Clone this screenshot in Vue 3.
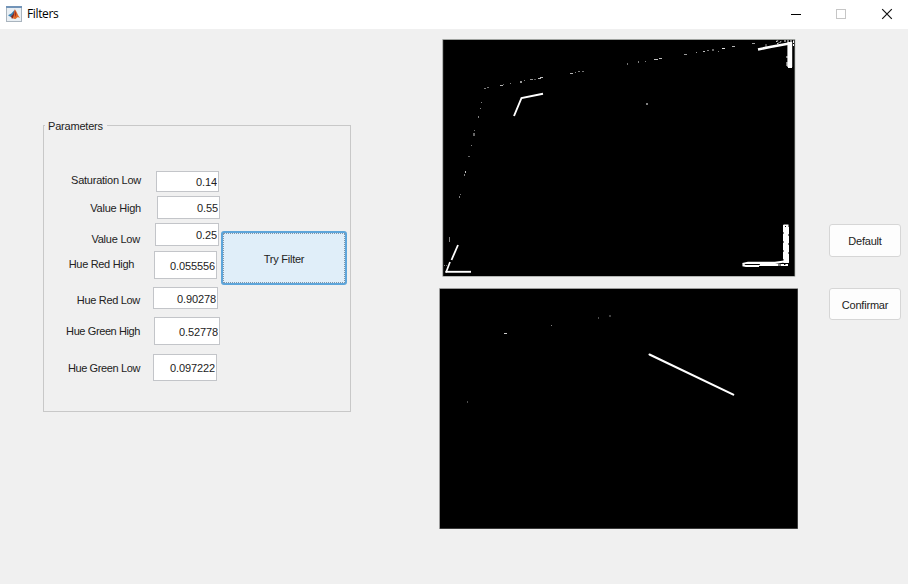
<script setup>
import { reactive } from 'vue'

const params = reactive([
  { label: 'Saturation Low', value: '0.14' },
  { label: 'Value High', value: '0.55' },
  { label: 'Value Low', value: '0.25' },
  { label: 'Hue Red High', value: '0.055556' },
  { label: 'Hue Red Low', value: '0.90278' },
  { label: 'Hue Green High', value: '0.52778' },
  { label: 'Hue Green Low', value: '0.097222' },
])

// Isolated mask pixels: [x, y, width, height, brightness]
const redSpecks = [
  [484, 88, 2, 1, 0.5], [487, 87, 2, 1, 0.45], [500, 85, 3, 1, 0.7], [503, 84, 1, 1, 0.4],
  [510, 83, 1, 1, 0.5], [520, 81, 2, 2, 0.6], [524, 80, 1, 1, 0.5], [530, 79, 3, 1, 0.6],
  [534, 79, 2, 1, 0.35], [538, 78, 3, 1, 0.75], [540, 77, 3, 1, 0.75],
  [570, 73, 3, 1, 0.7], [575, 72, 1, 1, 0.5], [578, 71, 2, 1, 0.5], [582, 71, 2, 1, 0.45],
  [627, 63, 1, 2, 0.45], [638, 61, 1, 2, 0.5], [645, 61, 1, 1, 0.5], [654, 59, 4, 1, 0.75],
  [659, 58, 3, 1, 0.75], [684, 54, 3, 1, 0.6], [696, 52, 1, 1, 0.6], [703, 51, 2, 1, 0.75],
  [707, 50, 2, 1, 0.5], [712, 49, 2, 2, 0.4], [718, 51, 1, 1, 0.5], [722, 48, 3, 1, 0.9],
  [732, 46, 3, 1, 0.7], [752, 43, 3, 1, 0.6], [646, 103, 2, 2, 0.5],
  [481, 102, 1, 1, 0.5], [480, 108, 1, 1, 0.5], [478, 116, 1, 2, 0.5], [474, 130, 1, 1, 0.45],
  [473, 133, 2, 3, 0.4], [471, 145, 1, 1, 0.5], [468, 156, 2, 1, 0.4],
  [465, 171, 1, 2, 0.75], [464, 174, 1, 2, 0.5], [460, 194, 1, 1, 0.45], [459, 196, 1, 2, 0.5],
  [449, 237, 1, 5, 0.5], [444, 265, 1, 1, 0.5], [446, 265, 1, 1, 0.4],
]

const greenSpecks = [
  [504, 333, 3, 1, 0.8], [551, 325, 1, 1, 0.5], [598, 317, 1, 2, 0.3],
  [609, 315, 2, 2, 0.25], [467, 401, 1, 2, 0.3],
]
</script>

<template>
  <div class="window">
    <header class="titlebar">
      <svg class="logo" width="16" height="16" viewBox="0 0 16 16">
        <rect x="0.5" y="0.5" width="15" height="15" fill="#e9eff4" stroke="#a9b4be" />
        <rect x="0" y="0" width="16" height="2" fill="#7294b8" />
        <path d="M2 9.3 5.3 7.4 8.5 4 7.6 8.8 5 11.2Z" fill="#3c83b5" />
        <path d="M5 10.5 7 8.3 9 3.5 8.8 9.5 6 13Z" fill="#7b2824" />
        <path d="M8.8 3.3C10.5 4.8 11.8 9.5 14 11.8 12 10.8 11 11.2 9.8 12.8 8.8 13.6 7.8 12.5 6.8 12.2 8.2 10 8 7 8.8 3.3Z" fill="#e16a27" />
        <path d="M9 4.5 10.3 8 9.5 11 8.8 9Z" fill="#a52f20" />
      </svg>
      <h1 class="title">Filters</h1>
      <nav class="controls">
        <svg width="46" height="28" viewBox="0 0 46 28"><path d="M11 14.5H21" stroke="#000" /></svg>
        <svg width="46" height="28" viewBox="0 0 46 28"><rect x="10.5" y="9.5" width="9" height="9" fill="none" stroke="#c6c6c6" /></svg>
        <svg width="31" height="28" viewBox="0 0 31 28"><path d="M10.2 9.2 19.8 18.8M19.8 9.2 10.2 18.8" stroke="#111" stroke-width="1.2" /></svg>
      </nav>
    </header>

    <main class="content">
      <fieldset class="panel">
        <legend>Parameters</legend>
        <div class="form">
          <div class="rows">
            <div v-for="p in params" :key="p.label" class="row">
              <label :for="p.label">{{ p.label }}</label>
              <input :id="p.label" v-model="p.value" type="text" />
            </div>
          </div>
          <button class="try" type="button"><span>Try Filter</span></button>
        </div>
      </fieldset>

      <section class="previews">
        <svg class="red-mask" width="354" height="238" viewBox="442 39 354 238">
          <rect x="442.4" y="39.2" width="352.8" height="237.4" fill="#8d918d" />
          <rect x="443.2" y="40" width="351.3" height="236" fill="#000" />
          <g fill="#fff">
            <rect v-for="(s, i) in redSpecks" :key="i" :x="s[0]" :y="s[1]" :width="s[2]" :height="s[3]" :opacity="s[4]" />
          </g>
          <g fill="none" stroke="#fff">
            <path d="M514 116 521.5 98 543 93.7" stroke-width="1.9" />
            <path d="M458 245 451.5 260" stroke-width="1.8" />
            <path d="M450 262 446 272.5" stroke-width="1.7" />
            <path d="M445.5 271.8H471" stroke-width="1.9" />
            <path d="M758 49.5 770 47 792 43" stroke-width="2.6" />
            <path d="M789.8 42V67" stroke-width="4.8" />
            <path d="M787 56V58M787 62V66M788 67.5H792" stroke-width="1" />
            <path d="M776 41.5 779 40.5M777 44 782 41M784 41H794M793.5 41V46" stroke-width="1" stroke-dasharray="2 1" />
            <path d="M766 44V47" stroke-width="1" opacity="0.6" />
            <path d="M786 224.5V263" stroke-width="5" />
            <path d="M783.5 225V262M788.5 227V262" stroke-width="1" stroke-dasharray="7 2" />
            <path d="M742.5 264 748 262.8H775L784 261.5 789 262" stroke-width="2.2" />
            <path d="M742.5 265.3 746 266H759M759 265H784L788 265" stroke-width="2" />
          </g>
          <g fill="#000">
            <rect x="745" y="264.2" width="15" height="0.8" />
            <rect x="778" y="264.5" width="3" height="1" />
            <rect x="784" y="263" width="1.4" height="2" />
            <rect x="787" y="263" width="1" height="1" />
            <rect x="785" y="226" width="1" height="1" />
          </g>
        </svg>
        <svg class="green-mask" width="359" height="241" viewBox="439 288 359 241">
          <rect x="439.3" y="288.3" width="358.7" height="240.7" fill="#777" />
          <rect x="440" y="289" width="357.5" height="239.5" fill="#000" />
          <g fill="#fff">
            <rect v-for="(s, i) in greenSpecks" :key="i" :x="s[0]" :y="s[1]" :width="s[2]" :height="s[3]" :opacity="s[4]" />
          </g>
          <path d="M649.5 354.5 733.3 394.6" stroke="#fff" stroke-width="2.1" stroke-linecap="round" />
        </svg>
      </section>

      <aside class="actions">
        <button type="button">Default</button>
        <button type="button">Confirmar</button>
      </aside>
    </main>
  </div>
</template>

<style>
body {
  background: #f0f0f0;
}
</style>

<style scoped>
.window {
  width: 908px;
  height: 584px;
  overflow: hidden;
  background: #f0f0f0;
  color: #222;
  font: 11px/14px "Liberation Sans", Arial, sans-serif;
}
.titlebar {
  display: flex;
  align-items: center;
  box-sizing: border-box;
  height: 29px;
  padding: 0 0 1px 6px;
  background: #fff;
}
.title {
  margin: 0 0 0 5px;
  font: 400 12px/16px "Open Sans", "Noto Sans", sans-serif;
  letter-spacing: -0.36px;
  color: #000;
}
.controls {
  display: flex;
  margin-left: auto;
  padding-right: 5px;
}
.controls svg {
  flex: none;
}
.content {
  display: flex;
  align-items: flex-start;
}
.panel {
  box-sizing: border-box;
  width: 308px;
  height: 294px;
  min-width: 0;
  margin: 89px 0 0 43px;
  padding: 0;
  border: 1px solid #c8c8c8;
}
.panel legend {
  margin-left: 1px;
  padding: 1px 4px 0 3px;
  letter-spacing: -0.2px;
}
.form {
  display: flex;
  margin-top: 38px;
}
.rows {
  width: 177px;
}
.row {
  display: flex;
  align-items: flex-start;
  height: var(--h);
  margin-top: var(--gap, 0);
}
.row label {
  width: var(--end);
  margin-top: var(--drop);
  text-align: right;
  white-space: nowrap;
  letter-spacing: var(--track, -0.32px);
}
.row input {
  box-sizing: border-box;
  width: var(--w);
  height: var(--h);
  margin: 0 0 0 var(--space);
  padding: 1px 1px 0 0;
  border: 1px solid #c3c5c9;
  border-radius: 0;
  outline: 0;
  background: #fff;
  color: #222;
  font: inherit;
  text-align: right;
  letter-spacing: -0.1px;
}
.row:nth-child(1) { --h: 21px; --w: 63px; --end: 97px; --space: 15px; --drop: 2px; --track: -0.25px; }
.row:nth-child(2) { --gap: 4px; --h: 23px; --w: 63px; --end: 97px; --space: 16px; --drop: 5px; --track: -0.22px; }
.row:nth-child(3) { --gap: 4px; --h: 23px; --w: 64px; --end: 96px; --space: 15px; --drop: 9px; --track: -0.22px; }
.row:nth-child(4) { --gap: 5px; --h: 28px; --w: 63px; --end: 90px; --space: 20px; --drop: 6px; }
.row:nth-child(5) { --gap: 8px; --h: 22px; --w: 65px; --end: 96px; --space: 13px; --drop: 6px; }
.row:nth-child(6) { --gap: 8px; --h: 28px; --w: 66px; --end: 96px; --space: 14px; --drop: 7px; --track: -0.4px; }
.row:nth-child(7) { --gap: 9px; --h: 27px; --w: 64px; --end: 96px; --space: 13px; --drop: 7px; --track: -0.38px; }
button {
  box-sizing: border-box;
  margin: 0;
  padding: 1px 0 0;
  font: inherit;
  color: #222;
  letter-spacing: -0.2px;
}
.try {
  width: 126px;
  height: 54px;
  margin-top: 60px;
  padding: 0;
  border: 2px solid #5ea5da;
  border-radius: 3px;
  background: #e0eef9;
}
.try span {
  display: grid;
  place-items: center;
  box-sizing: border-box;
  height: 50px;
  padding: 2px 0 0;
  border: 1px dotted #8296a8;
  letter-spacing: -0.25px;
}
.previews {
  display: flex;
  flex-direction: column;
  width: 359px;
  margin: 10px 0 0 88px;
}
.previews svg {
  display: block;
}
.red-mask {
  margin-left: 3px;
}
.green-mask {
  margin-top: 11px;
}
.actions {
  display: grid;
  gap: 31px;
  margin: 195px 0 0 31px;
}
.actions button {
  width: 72px;
  height: 33px;
  border: 1px solid #d6d6d6;
  border-radius: 3px;
  background: #fdfdfd;
}
.actions button:last-child {
  height: 32px;
}
</style>
